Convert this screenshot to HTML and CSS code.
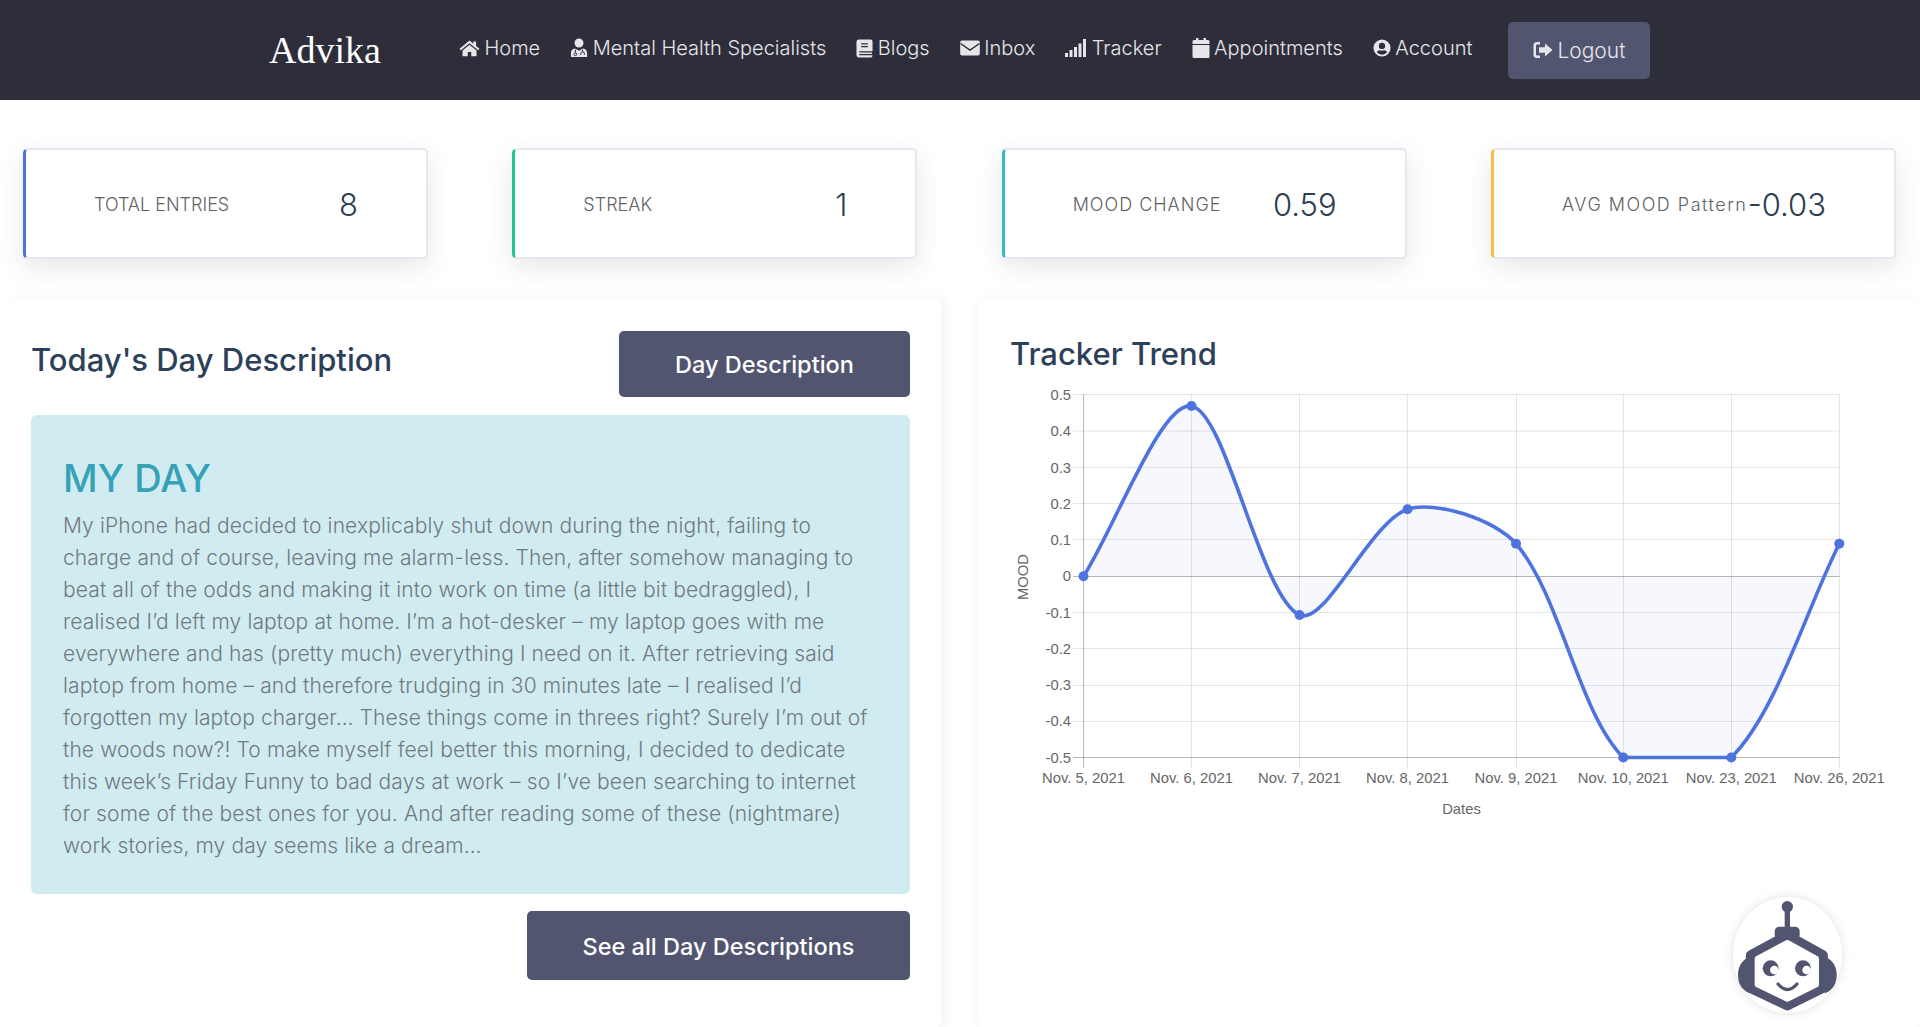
FILE: index.html
```html
<!DOCTYPE html>
<html lang="en">
<head>
    <meta charset="UTF-8">
    <meta name="viewport" content="width=device-width, initial-scale=1.0">
    <title>Advika</title>
    <link rel="stylesheet" href="styles.css">
</head>
<body>
    <nav class="navbar">
        <a class="brand" href="#">Advika</a>
        <ul class="nav-links">
            <li><a href="#"><svg class="ico" width="21" height="18" viewBox="0 0 24 20"><path d="M12 1.500.6 10.800l1.500 1.800L12 4.600l9.900 8 1.500-1.800-3.900-3.200V2.500h-3.200v2.500zM12 6.300 4 12.800v6.700h6v-5h4v5h6v-6.700z"/></svg>Home</a></li>
            <li><a href="#"><svg class="ico" width="18" height="20" viewBox="0 0 20 22"><circle cx="10" cy="5.500" r="5"/><path d="M1 21v-4.500C1 13.500 3 12 5.500 11.600L10 14l4.500-2.400C17 12 19 13.500 19 16.500V21z"/><path d="M6 13v3M14 13v2" stroke="#2e2e3a" stroke-width="1.200" fill="none"/><circle cx="6" cy="18" r="1.500" fill="none" stroke="#2e2e3a" stroke-width="1.100"/><path d="M12 18.500v-1.200a2 2 0 0 1 4 0v1.200" fill="none" stroke="#2e2e3a" stroke-width="1.100"/></svg>Mental Health Specialists</a></li>
            <li><a href="#"><svg class="ico" width="17" height="19" viewBox="0 0 18 20"><path d="M3 .5h12.500A2 2 0 0 1 17.500 2.500v15a2 2 0 0 1-2 2H3a2.500 2.500 0 0 1-2.500-2.500V3A2.500 2.500 0 0 1 3 .5z"/><path d="M5.500 5h7M5.500 8h7M3.500 13.500h14v3h-14" stroke="#2e2e3a" stroke-width="1.300" fill="none"/></svg>Blogs</a></li>
            <li><a href="#"><svg class="ico" width="20" height="16" viewBox="0 0 20 16"><path d="M2 .5h16a1.800 1.800 0 0 1 1.800 1.800v11.400a1.800 1.800 0 0 1-1.800 1.800H2a1.800 1.800 0 0 1-1.800-1.800V2.300A1.800 1.800 0 0 1 2 .5z"/><path d="M.5 3.500 10 10l9.500-6.500" stroke="#2e2e3a" stroke-width="1.500" fill="none"/></svg>Inbox</a></li>
            <li><a href="#"><svg class="ico" width="22" height="18" viewBox="0 0 22 18"><path d="M0 14h3v4H0zM4.500 11h3v7h-3zM9 8h3v10H9zM13.500 4.500h3V18h-3zM18 0h3v18h-3z"/></svg>Tracker</a></li>
            <li><a href="#"><svg class="ico" width="18" height="20" viewBox="0 0 18 20"><path d="M4 0h2.500v3H4zM11.500 0H14v3h-2.500zM2 2h14a1.500 1.500 0 0 1 1.500 1.500V6H.5V3.500A1.500 1.500 0 0 1 2 2zM.5 7h17v11.500A1.500 1.500 0 0 1 16 20H2a1.500 1.500 0 0 1-1.500-1.500z"/></svg>Appointments</a></li>
            <li><a href="#"><svg class="ico" width="18" height="18" viewBox="0 0 20 20"><path fill-rule="evenodd" d="M10 .5a9.500 9.500 0 1 0 0 19 9.500 9.500 0 0 0 0-19zM10 4.200a3.500 3.500 0 1 1 0 7 3.500 3.500 0 0 1 0-7zM10 17.500a7.500 7.500 0 0 1-5.700-2.700c.6-1.300 1.800-2.200 3.200-2.200.8.300 1.600.5 2.500.5s1.700-.2 2.500-.5c1.400 0 2.600.9 3.200 2.200a7.500 7.500 0 0 1-5.700 2.700z"/></svg>Account</a></li>
        </ul>
        <a class="logout" href="#"><svg class="ico" width="20" height="18" viewBox="0 0 20 18"><path d="M7 1H4a3.500 3.500 0 0 0-3.500 3.500v9A3.500 3.500 0 0 0 4 17h3v-2.500H4a1 1 0 0 1-1-1v-9a1 1 0 0 1 1-1h3z"/><path d="M12 2.500 19.500 9 12 15.500V11.700H6V6.300h6z"/></svg>Logout</a>
    </nav>

    <section class="stats">
        <div class="stat stat-blue"><span class="stat-label">TOTAL ENTRIES</span><span class="stat-value">8</span></div>
        <div class="stat stat-green"><span class="stat-label">STREAK</span><span class="stat-value">1</span></div>
        <div class="stat stat-teal"><span class="stat-label">MOOD CHANGE</span><span class="stat-value">0.59</span></div>
        <div class="stat stat-yellow"><span class="stat-label">AVG MOOD Pattern</span><span class="stat-value">-0.03</span></div>
    </section>

    <main class="panels">
        <section class="panel panel-left">
            <div class="panel-head">
                <h2>Today's Day Description</h2>
                <a class="btn" href="#">Day Description</a>
            </div>
            <div class="day-box">
                <h3>MY DAY</h3>
                <p>My iPhone had decided to inexplicably shut down during the night, failing to<br>
                charge and of course, leaving me alarm-less. Then, after somehow managing to<br>
                beat all of the odds and making it into work on time (a little bit bedraggled), I<br>
                realised I’d left my laptop at home. I’m a hot-desker – my laptop goes with me<br>
                everywhere and has (pretty much) everything I need on it. After retrieving said<br>
                laptop from home – and therefore trudging in 30 minutes late – I realised I’d<br>
                forgotten my laptop charger… These things come in threes right? Surely I’m out of<br>
                the woods now?! To make myself feel better this morning, I decided to dedicate<br>
                this week’s Friday Funny to bad days at work – so I’ve been searching to internet<br>
                for some of the best ones for you. And after reading some of these (nightmare)<br>
                work stories, my day seems like a dream…</p>
            </div>
            <div class="panel-foot">
                <a class="btn btn-tall" href="#">See all Day Descriptions</a>
            </div>
        </section>

        <section class="panel panel-right">
            <h2>Tracker Trend</h2>
            <svg class="chart" viewBox="1000 380 900 440" width="900" height="440">
                <g class="grid">
                    <path d="M1073 394.500H1839.500M1073 431H1839.500M1073 467.500H1839.500M1073 503.500H1839.500M1073 539.500H1839.500M1073 612.500H1839.500M1073 648.500H1839.500M1073 685.500H1839.500M1073 721.500H1839.500"/>
                    <path d="M1191.500 394V768M1299.500 394V768M1407.500 394V768M1516.500 394V768M1623.500 394V768M1731.500 394V768M1839.500 394V768"/>
                </g>
                <path class="axis" d="M1073 576.500H1839.500M1073 757.500H1839.500M1083.500 394V768"/>
                <path class="area" d="M1083.500 576.300C1115.900 525.200 1161.600 400.600 1191.500 406C1226.400 412.300 1260 596.100 1299.500 615C1324.800 627.100 1370.500 521.500 1407.500 509.300C1435.400 500.100 1495.100 519.700 1516 543.700C1559.900 594.200 1578.800 713.300 1623.300 757.500C1643.400 757.500 1711.200 757.500 1731.300 757.500C1776 713.300 1806.900 607.800 1839.300 543.700V576.300H1083.500Z"/>
                <path class="line" d="M1083.500 576.300C1115.900 525.200 1161.600 400.600 1191.500 406C1226.400 412.300 1260 596.100 1299.500 615C1324.800 627.100 1370.500 521.500 1407.500 509.300C1435.400 500.100 1495.100 519.700 1516 543.700C1559.900 594.200 1578.800 713.300 1623.300 757.500C1643.400 757.500 1711.200 757.500 1731.300 757.500C1776 713.300 1806.900 607.800 1839.300 543.700"/>
                <g class="dots">
                    <circle cx="1083.500" cy="576.300" r="5"/><circle cx="1191.500" cy="406" r="5"/><circle cx="1299.500" cy="615" r="5"/><circle cx="1407.500" cy="509.300" r="5"/><circle cx="1516" cy="543.700" r="5"/><circle cx="1623.300" cy="757.500" r="5"/><circle cx="1731.300" cy="757.500" r="5"/><circle cx="1839.300" cy="543.700" r="5"/>
                </g>
                <g class="y-ticks">
                    <text x="1071" y="399.500">0.5</text><text x="1071" y="436">0.4</text><text x="1071" y="472.500">0.3</text><text x="1071" y="508.500">0.2</text><text x="1071" y="544.500">0.1</text><text x="1071" y="581">0</text><text x="1071" y="617.500">-0.1</text><text x="1071" y="653.500">-0.2</text><text x="1071" y="690">-0.3</text><text x="1071" y="726">-0.4</text><text x="1071" y="762.500">-0.5</text>
                </g>
                <g class="x-ticks">
                    <text x="1083.500" y="783">Nov. 5, 2021</text><text x="1191.500" y="783">Nov. 6, 2021</text><text x="1299.500" y="783">Nov. 7, 2021</text><text x="1407.500" y="783">Nov. 8, 2021</text><text x="1516" y="783">Nov. 9, 2021</text><text x="1623.300" y="783">Nov. 10, 2021</text><text x="1731.300" y="783">Nov. 23, 2021</text><text x="1839.300" y="783">Nov. 26, 2021</text>
                </g>
                <text class="axis-title" x="1461.500" y="814">Dates</text>
                <text class="axis-title" transform="translate(1028 577) rotate(-90)">MOOD</text>
            </svg>
        </section>
    </main>

    <a class="bot" href="#">
        <svg viewBox="100 51 327 348" width="109" height="116">
            <circle cx="263" cy="80" r="17"/>
            <rect x="255" y="90" width="16" height="55"/>
            <rect x="225" y="140" width="75" height="38" rx="14"/>
            <path d="M150 230Q115 245 115 285Q115 325 150 340z"/>
            <path d="M376 230Q411 245 411 285Q411 325 376 340z"/>
            <path class="bot-shell" d="M263 165 371 225V325L263 378 152 325V225z"/>
            <path class="bot-face" d="M263 188 350 236V314L263 357 173 314V236z"/>
            <circle cx="213" cy="265" r="24"/>
            <circle class="bot-pupil" cx="224" cy="270" r="13"/>
            <circle cx="310" cy="265" r="24"/>
            <circle class="bot-pupil" cx="321" cy="270" r="13"/>
            <path class="bot-smile" d="M235 312Q263 345 292 312"/>
        </svg>
    </a>
</body>
</html>
```

FILE: styles.css
```css
* {
    box-sizing: border-box;
}
body {
    margin: 0;
    padding: 0;
    background-color: #fff;
    font-family: "Inter", "Noto Sans", sans-serif;
    height: 1027px;
    overflow: hidden;
}
a {
    text-decoration: none;
}

/* Navbar */
.navbar {
    height: 100px;
    background-color: #2e2e3a;
    display: flex;
    align-items: center;
    padding-left: 269px;
}
.brand {
    font-family: "Liberation Serif", serif;
    font-size: 38px;
    color: #fff;
    width: 190px;
}
.nav-links {
    display: flex;
    list-style: none;
    margin: 0 0 4px;
    padding: 0;
    gap: 30px;
}
.nav-links a {
    display: flex;
    align-items: center;
    gap: 4.5px;
    color: #e6e6ea;
    font-size: 20px;
    font-weight: 300;
    white-space: nowrap;
}
.ico {
    fill: #e6e6ea;
    flex: none;
}
.logout {
    display: flex;
    align-items: center;
    justify-content: center;
    gap: 4px;
    width: 142px;
    height: 57px;
    margin-left: 36px;
    border-radius: 5px;
    background-color: #52556f;
    color: #e6e6ea;
    font-size: 21px;
    font-weight: 300;
}

/* Stat cards */
.stats {
    display: grid;
    grid-template-columns: repeat(4, 405px);
    justify-content: space-between;
    padding: 48px 24px 0 23px;
}
.stat {
    height: 111px;
    padding: 2px 68px 0 68px;
    background-color: #fff;
    border: 2px solid #e6e7f0;
    border-left: 3px solid #4e73df;
    border-radius: 5px;
    box-shadow: 0 8px 26px rgba(58, 59, 69, 0.12);
    display: flex;
    align-items: center;
    justify-content: space-between;
}
.stat-green { border-left-color: #1cc88a; }
.stat-teal { border-left-color: #36b9cc; }
.stat-yellow { border-left-color: #f6c23e; }
.stat-label {
    font-size: 18px;
    font-weight: 300;
    color: #5f6368;
    white-space: nowrap;
}
.stat-teal .stat-label {
    letter-spacing: 1px;
}
.stat-yellow .stat-label {
    letter-spacing: 1.5px;
}
.stat-value {
    font-size: 31px;
    font-weight: 300;
    color: #2c3e50;
    white-space: nowrap;
}

/* Panels */
.panels {
    display: flex;
    justify-content: space-between;
    padding: 41px 0 0 6px;
}
.panel {
    height: 727px;
    background-color: #fff;
    border-radius: 5px;
    box-shadow: 0 0 14px rgba(58, 59, 69, 0.04);
}
.panel h2 {
    margin: 0;
    font-size: 31px;
    line-height: 35px;
    font-weight: 500;
    color: #2c4059;
}
.panel-left {
    width: 935px;
    padding: 31px 31px 0 25px;
    box-shadow: 6px 0 12px rgba(58, 59, 69, 0.05);
}
.panel-right {
    width: 942px;
    padding: 36px 0 0 32px;
}
.panel-head {
    display: flex;
    justify-content: space-between;
    align-items: flex-start;
    height: 84px;
}
.panel-head h2 {
    padding-top: 11px;
}
.btn {
    display: flex;
    align-items: center;
    justify-content: center;
    width: 291px;
    height: 66px;
    border-radius: 5px;
    background-color: #52556f;
    color: #fff;
    font-size: 23.5px;
    font-weight: 500;
}
.btn-tall {
    width: 383px;
    height: 69px;
    padding-top: 1px;
}
.day-box {
    height: 479px;
    padding: 39px 32px 0;
    background-color: #d1ecf1;
    border-radius: 6px;
}
.day-box h3 {
    margin: 0 0 8px;
    font-size: 38px;
    line-height: 48px;
    font-weight: 500;
    color: #36a2b8;
}
.day-box p {
    margin: 0;
    font-size: 21px;
    line-height: 32px;
    font-weight: 300;
    letter-spacing: 0.12px;
    color: #6f7a80;
    white-space: nowrap;
}
.panel-foot {
    display: flex;
    justify-content: flex-end;
    padding-top: 17px;
}

/* Chart */
.chart {
    display: block;
    margin: 9px 0 0 -10px;
}
.grid path {
    stroke: rgba(0, 0, 0, 0.1);
    stroke-width: 1;
    fill: none;
}
.axis {
    stroke: rgba(0, 0, 0, 0.28);
    stroke-width: 1;
    fill: none;
}
.area {
    fill: rgba(78, 115, 223, 0.05);
}
.line {
    stroke: #4e73df;
    stroke-width: 3.6;
    fill: none;
}
.dots circle {
    fill: #4e73df;
}
.chart text {
    font-family: "Liberation Sans", Arial, sans-serif;
    font-size: 14.8px;
    fill: #666;
}
.y-ticks text {
    text-anchor: end;
}
.x-ticks text,
.chart .axis-title {
    text-anchor: middle;
}

/* Chat bot button */
.bot {
    position: fixed;
    left: 1733px;
    top: 897px;
    width: 109px;
    height: 116px;
    border-radius: 50%;
    background-color: #fff;
    box-shadow: 0 0 10px rgba(58, 59, 69, 0.16);
}
.bot svg {
    display: block;
    fill: #52556f;
}
.bot .bot-shell {
    stroke: #52556f;
    stroke-width: 27;
    stroke-linejoin: round;
}
.bot .bot-face {
    fill: #fff;
    stroke: #fff;
    stroke-width: 16;
    stroke-linejoin: round;
}
.bot .bot-pupil {
    fill: #fff;
}
.bot .bot-smile {
    fill: none;
    stroke: #52556f;
    stroke-width: 10;
    stroke-linecap: round;
}
```
